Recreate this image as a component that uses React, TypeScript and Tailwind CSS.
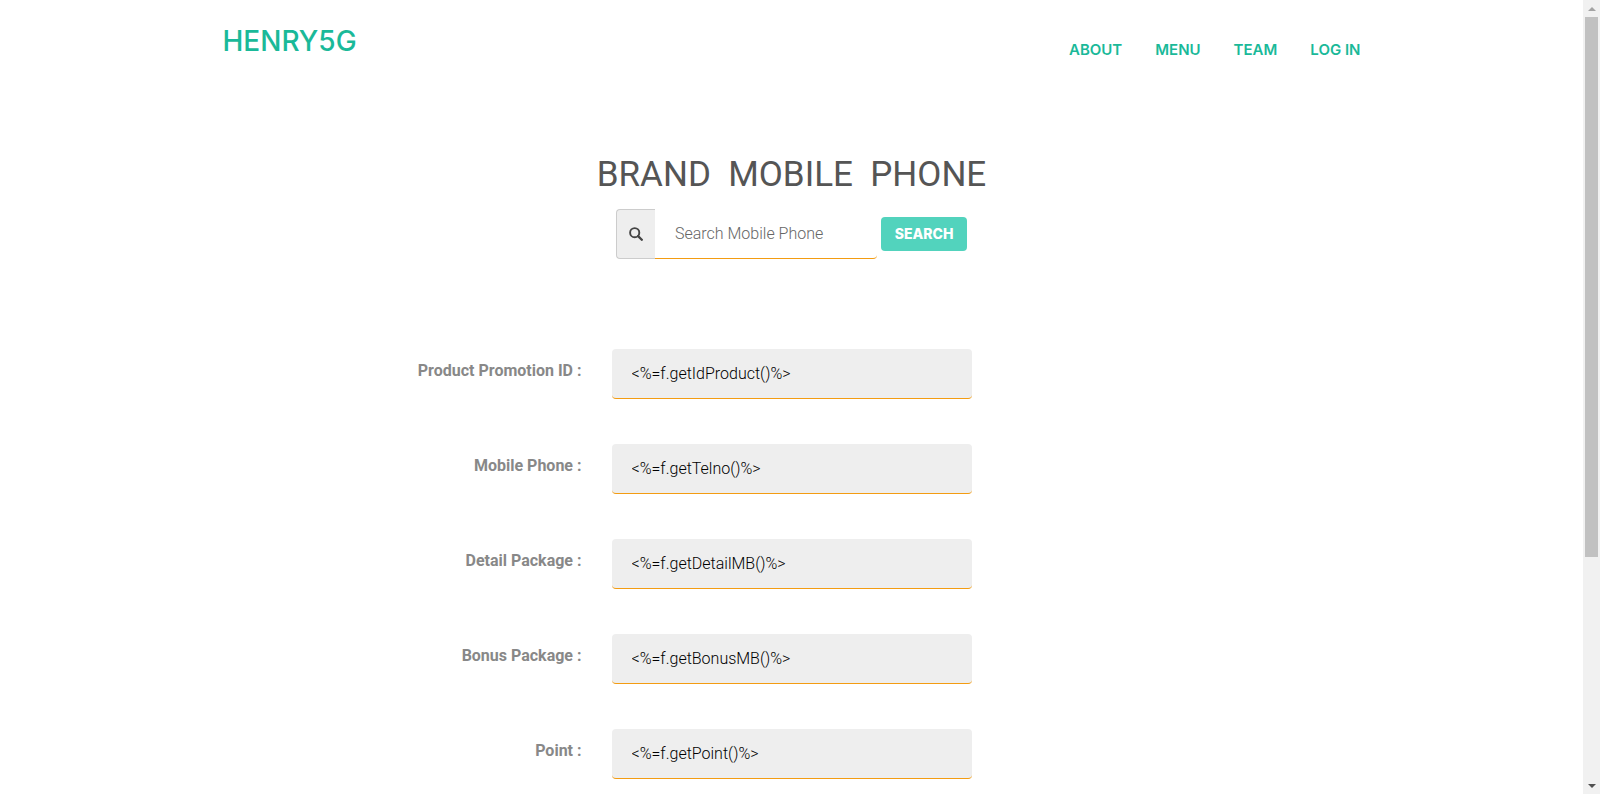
const links = ["ABOUT", "MENU", "TEAM", "LOG IN"];

const fields = [
  { id: "product", label: "Product Promotion ID :", value: "<%=f.getIdProduct()%>" },
  { id: "telno", label: "Mobile Phone :", value: "<%=f.getTelno()%>" },
  { id: "detail", label: "Detail Package :", value: "<%=f.getDetailMB()%>" },
  { id: "bonus", label: "Bonus Package :", value: "<%=f.getBonusMB()%>" },
  { id: "point", label: "Point :", value: "<%=f.getPoint()%>" },
];

function Header() {
  return (
    <header className="flex items-start justify-between px-4">
      <a href="#top" className="pt-[21px] font-['Inter',sans-serif] text-[28px] leading-10 font-medium text-[#1ab999]">
        HENRY5G
      </a>
      <nav className="flex gap-[33px] pt-10 font-['Inter',sans-serif] text-[15px] leading-5 font-semibold text-[#1ab999]">
        {links.map((name) => (
          <a key={name} href={`#${name.toLowerCase().replace(" ", "-")}`}>
            {name}
          </a>
        ))}
      </nav>
    </header>
  );
}

function SearchForm() {
  return (
    <form className="flex items-center justify-center gap-1" onSubmit={(e) => e.preventDefault()}>
      <div className="flex h-[50px]">
        <label
          htmlFor="search"
          aria-label="Search Mobile Phone"
          className="flex w-[39px] items-center justify-center rounded-l border border-r-0 border-[#ccc] bg-[#eee]"
        >
          <svg viewBox="0 0 14 14" className="size-3.5" fill="none" stroke="#444" aria-hidden="true">
            <circle cx="5.7" cy="5.7" r="4.6" strokeWidth="1.9" />
            <path d="M9.1 9.1l3.7 3.7" strokeWidth="2.3" strokeLinecap="round" />
          </svg>
        </label>
        <input
          id="search"
          type="text"
          placeholder="Search Mobile Phone"
          className="w-[222px] rounded-r border-b border-[#f39c12] px-5 text-base font-light text-black outline-none placeholder:text-[#666]"
        />
      </div>
      <button
        type="submit"
        className="h-[34px] w-[86px] rounded bg-[#52d3bd] font-['Inter',sans-serif] text-sm font-extrabold text-white"
      >
        SEARCH
      </button>
    </form>
  );
}

function ScrollRail() {
  return (
    <div aria-hidden="true" className="sticky top-0 flex h-screen w-[17px] shrink-0 flex-col items-center bg-[#f1f1f1]">
      <div className="flex h-[17px] items-center">
        <svg viewBox="0 0 8 4" className="h-1 w-2" fill="#a3a3a3">
          <path d="M0 4L4 0l4 4z" />
        </svg>
      </div>
      <div className="flex w-full flex-1 flex-col items-center">
        <div className="h-[71%] w-[13px] bg-[#c1c1c1]" />
      </div>
      <div className="flex h-[17px] items-center">
        <svg viewBox="0 0 8 4" className="h-1 w-2" fill="#505050">
          <path d="M0 0l4 4 4-4z" />
        </svg>
      </div>
    </div>
  );
}

export default function App() {
  return (
    <div id="top" className="flex min-h-screen bg-white font-['Roboto',sans-serif]">
      <div className="min-w-0 flex-1">
        <div className="mx-auto max-w-[1170px]">
          <Header />
          <main className="pt-21">
            <h1 className="mb-1 text-center text-[35px] leading-[60px] whitespace-pre text-[#555]">
              {"BRAND  MOBILE  PHONE"}
            </h1>
            <SearchForm />
            <form className="mt-[90px] flex flex-col gap-[45px]">
              {fields.map(({ id, label, value }) => (
                <div key={id} className="grid grid-cols-3">
                  <label htmlFor={id} className="px-[15px] pt-2.5 text-right text-base font-bold text-[#888]">
                    {label}
                  </label>
                  <div className="px-[15px]">
                    <input
                      id={id}
                      type="text"
                      readOnly
                      defaultValue={value}
                      className="h-[50px] w-full rounded border-b border-[#f39c12] bg-[#eee] px-5 text-base font-light text-black outline-none"
                    />
                  </div>
                </div>
              ))}
            </form>
          </main>
        </div>
      </div>
      <ScrollRail />
    </div>
  );
}
